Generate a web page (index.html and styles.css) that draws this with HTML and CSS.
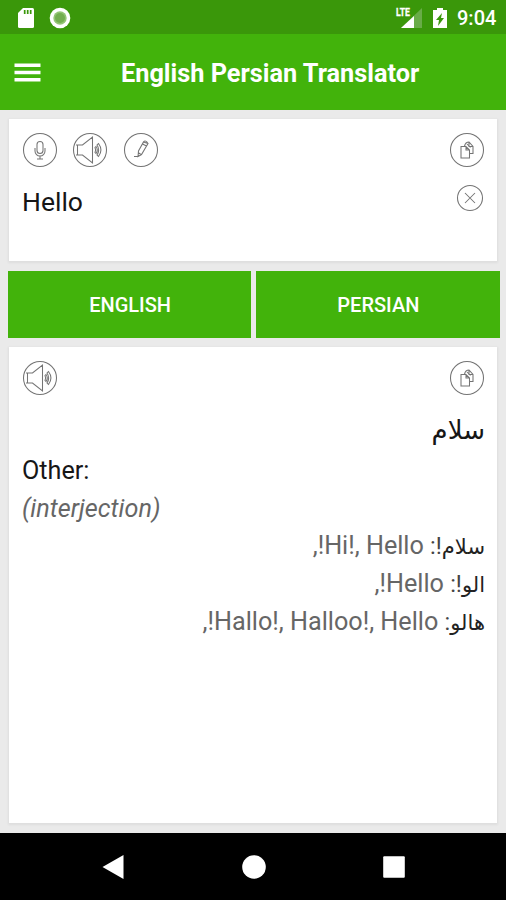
FILE: index.html
```html
<!DOCTYPE html>
<html lang="en">
<head>
<meta charset="utf-8">
<title>English Persian Translator</title>
<link rel="stylesheet" href="styles.css">
</head>
<body>
<svg class="defs" aria-hidden="true">
  <symbol id="copy" viewBox="0 0 36 36">
    <circle cx="18" cy="18" r="16.500"/>
    <path d="M12 14.500h5l3.500 3.500v8H12zM17 14.500v3.500h3.500M15.500 14q1-4 4.500-4l4 4.500v7h-3M20 10v4.500h4M16 14l4 4M18 12l3.500 3.500"/>
  </symbol>
  <symbol id="speaker" viewBox="0 0 36 36">
    <circle cx="18" cy="18" r="16.500"/>
    <path d="M4 13h6.500l10-8v26l-10-8H4M5.500 13v10M24 14.500c1.500 2 1.500 5 0 7l-1-1c.8-1.500.8-3.500 0-5zM26.500 11.500c3 4 3 9 0 13l-1.500-1.500c2-3 2-7 0-10z"/>
  </symbol>
</svg>
<header class="status">
  <svg class="sd" viewBox="0 0 18 22"><path fill="#fff" d="M6 1h9.500q1.500 0 1.500 1.500v17q0 1.500-1.500 1.500h-13Q1 21 1 19.500V6z"/><path stroke="#3a970a" stroke-width="1.700" d="M7.700 3v4M10.700 3v4M13.700 3v4"/></svg>
  <svg class="ring" viewBox="0 0 22 22"><circle cx="11" cy="11" r="10.300" fill="#fff"/><circle cx="11" cy="11" r="6.700" fill="#93c574"/><circle cx="11" cy="11" r="5" fill="#73ae50"/></svg>
  <span class="grow"></span>
  <svg class="signal" viewBox="0 0 28 22"><path fill="#69ac48" d="M27 1v20H6z"/><path fill="#fff" d="M19 9v12H6z"/><path fill="#3a970a" d="M14 0h2v10h-2z"/><text x="1" y="9" textLength="14" lengthAdjust="spacingAndGlyphs">LTE</text></svg>
  <svg class="battery" viewBox="0 0 16 22"><path fill="#fff" d="M5 1h6v2h4v18H1V3h4z"/><path fill="#3a970a" d="M10 6l-6 7h3l-1 6 6-8H9z"/></svg>
  <time class="clock">9:04</time>
</header>
<div class="toolbar">
  <svg class="menu" viewBox="0 0 26 19"><path stroke="#fff" stroke-width="3.500" d="M0 2.200h26M0 9.500h26M0 16.800h26"/></svg>
  <h1>English Persian Translator</h1>
</div>
<main>
  <section class="card source">
    <div class="tools">
      <svg class="icon" viewBox="0 0 36 36"><circle cx="18" cy="18" r="16.500"/><path d="M15 12.500a3 3 0 0 1 6 0v6a3 3 0 0 1-6 0zM13 16v3a5 5 0 0 0 10 0v-3M18 24v3M15 27h6"/></svg>
      <svg class="icon"><use href="#speaker"/></svg>
      <svg class="icon" viewBox="0 0 36 36"><circle cx="18" cy="18" r="16.500"/><path d="M20.500 10l4.500 1.500-6.500 11-3.500 2 .5-5.500zM19.500 12l4 2M15 20.500l3 2M11 24.500h5M20.500 10q2-2.500 4.500 1.500"/></svg>
      <span class="grow"></span>
      <svg class="icon"><use href="#copy"/></svg>
    </div>
    <div class="entry"><p>Hello</p><svg class="clear" viewBox="0 0 28 28"><circle cx="14" cy="14" r="12.500"/><path d="M9 9l10 10M19 9L9 19"/></svg></div>
  </section>
  <div class="languages"><button>ENGLISH</button><button>PERSIAN</button></div>
  <section class="card result">
    <div class="tools">
      <svg class="icon"><use href="#speaker"/></svg>
      <span class="grow"></span>
      <svg class="icon"><use href="#copy"/></svg>
    </div>
    <p class="translation" dir="rtl" lang="fa">سلام</p>
    <p class="other">Other:</p>
    <p class="kind">(interjection)</p>
    <p class="meaning" dir="rtl"><b>سلام</b><i>!:</i> Hi!, Hello!,</p>
    <p class="meaning" dir="rtl"><b>الو</b><i>!:</i> Hello!,</p>
    <p class="meaning" dir="rtl"><b>هالو</b><i>:</i> Hallo!, Halloo!, Hello!,</p>
  </section>
</main>
<nav>
  <svg viewBox="0 0 24 24"><path d="M1.500 12L22.500 0v24z"/></svg>
  <svg viewBox="0 0 24 24"><circle cx="12" cy="12" r="11.800"/></svg>
  <svg viewBox="0 0 24 24"><rect x="1.200" y="1.200" width="21.600" height="21.600" rx="1"/></svg>
</nav>
</body>
</html>
```
FILE: styles.css
```css
* { box-sizing: border-box; }
body { margin: 0; width: 506px; height: 900px; display: flex; flex-direction: column; overflow: hidden; background: #eaeaea; font-family: Roboto, "DejaVu Sans", sans-serif; }
p, h1 { margin: 0; }
svg { display: block; flex: none; }
.defs { position: absolute; width: 0; height: 0; }
.grow { flex: 1; }
.status { flex: none; height: 34px; display: flex; align-items: center; padding: 1px 9px 0 17px; background: #3a970a; color: #fff; }
.sd { width: 18px; height: 22px; }
.ring { width: 22px; height: 22px; margin-left: 14px; }
.signal { width: 28px; height: 22px; margin-right: 9px; }
.signal text { font: bold 11px Roboto, sans-serif; fill: #fff; stroke: #fff; stroke-width: .3px; }
.battery { width: 16px; height: 22px; }
.clock { width: 40px; margin-left: 9px; font-size: 20px; font-weight: 500; line-height: 34px; white-space: nowrap; }
.toolbar { flex: none; height: 76px; display: flex; align-items: center; padding-left: 14px; background: #42b30b; color: #fff; }
.menu { width: 27px; height: 19px; }
h1 { margin: 4px 0 0 80px; font-size: 25.300px; line-height: 30px; font-weight: 700; white-space: nowrap; }
main { flex: 1; min-height: 0; padding: 9px 9px 10px; display: flex; flex-direction: column; }
.card { background: #fff; box-shadow: 0 1px 2px 1px #dedede; padding: 14px 12px 0 13px; }
.source { height: 142px; }
.tools { display: flex; gap: 14.500px; height: 36px; margin: -1px 0 0 -.5px; }
.icon { width: 36px; height: 36px; }
.icon, .clear { fill: none; stroke: #747474; stroke-width: 1.050; }
.entry { display: flex; justify-content: space-between; margin: 15px 1px 0 0; color: #161616; font-size: 26.500px; line-height: 38px; }
.clear { width: 28px; height: 28px; margin-top: 1px; }
.languages { display: grid; grid-template-columns: 1fr 1fr; gap: 5px; height: 67px; margin: 10px -2.500px 9px -1px; }
button { border: 0; padding: 1px 0 0 1px; background: #42b30b; color: #fff; font: 500 20px Roboto, sans-serif; }
.result { flex: 1; }
.translation { margin-top: 15px; color: #161616; font-size: 26px; line-height: 38px; height: 41px; }
.other, .kind, .meaning { font-size: 25.200px; height: 38px; line-height: 38px; white-space: nowrap; }
.other { color: #161616; }
.kind { color: #666; font-style: italic; }
.meaning { color: #666; line-height: 36px; }
.meaning b { color: #222; font-weight: 400; font-size: 21px; }
.meaning i { color: #444; font-style: normal; font-size: 23.500px; }
nav { flex: none; height: 67px; background: #000; display: flex; justify-content: center; align-items: center; gap: 116.500px; padding-left: 1px; }
nav svg { width: 24px; height: 24px; fill: #fff; }
```
